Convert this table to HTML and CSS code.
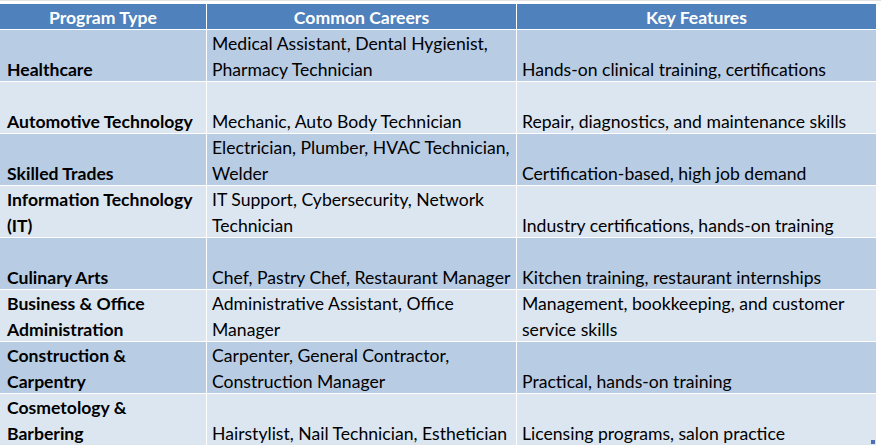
FILE: index.html
```html
<!DOCTYPE html>
<html lang="en">
<head>
<meta charset="utf-8">
<title>Vocational Programs</title>
<link rel="stylesheet" href="styles.css">
</head>
<body>
<div class="sheet">
  <div class="table">
    <div class="cell head"><span class="txt">Program Type</span></div>
    <div class="cell head"><span class="txt">Common Careers</span></div>
    <div class="cell head"><span class="txt">Key Features</span></div>

    <div class="cell dark name"><span class="txt">Healthcare</span></div>
    <div class="cell dark"><span class="txt">Medical Assistant, Dental Hygienist,<br>Pharmacy Technician</span></div>
    <div class="cell dark"><span class="txt">Hands-on clinical training, certifications</span></div>

    <div class="cell light name"><span class="txt">Automotive Technology</span></div>
    <div class="cell light"><span class="txt">Mechanic, Auto Body Technician</span></div>
    <div class="cell light"><span class="txt">Repair, diagnostics, and maintenance skills</span></div>

    <div class="cell dark name"><span class="txt">Skilled Trades</span></div>
    <div class="cell dark"><span class="txt">Electrician, Plumber, HVAC Technician,<br>Welder</span></div>
    <div class="cell dark"><span class="txt">Certification-based, high job demand</span></div>

    <div class="cell light name"><span class="txt">Information Technology<br>(IT)</span></div>
    <div class="cell light"><span class="txt">IT Support, Cybersecurity, Network<br>Technician</span></div>
    <div class="cell light"><span class="txt">Industry certifications, hands-on training</span></div>

    <div class="cell dark name"><span class="txt">Culinary Arts</span></div>
    <div class="cell dark"><span class="txt">Chef, Pastry Chef, Restaurant Manager</span></div>
    <div class="cell dark"><span class="txt">Kitchen training, restaurant internships</span></div>

    <div class="cell light name"><span class="txt">Business &amp; Office<br>Administration</span></div>
    <div class="cell light"><span class="txt">Administrative Assistant, Office<br>Manager</span></div>
    <div class="cell light"><span class="txt">Management, bookkeeping, and customer<br>service skills</span></div>

    <div class="cell dark name"><span class="txt">Construction &amp;<br>Carpentry</span></div>
    <div class="cell dark"><span class="txt">Carpenter, General Contractor,<br>Construction Manager</span></div>
    <div class="cell dark"><span class="txt">Practical, hands-on training</span></div>

    <div class="cell light name"><span class="txt">Cosmetology &amp;<br>Barbering</span></div>
    <div class="cell light"><span class="txt">Hairstylist, Nail Technician, Esthetician</span></div>
    <div class="cell light"><span class="txt">Licensing programs, salon practice</span><span class="handle"></span></div>
  </div>
</div>
</body>
</html>
```

FILE: styles.css
```css
html, body {
  margin: 0;
  padding: 0;
  background: #ffffff;
}

.sheet {
  padding-top: 3px;
  border-top: 1px solid #e3e3e3;
  width: 881px;
  height: 448px;
  box-sizing: border-box;
  font-family: Lato, "Open Sans", sans-serif;
  font-size: 17.6px;
  color: #000000;
}

.table {
  display: grid;
  grid-template-columns: 206px 309px 359px;
  grid-template-rows: 25px repeat(8, 51px);
  column-gap: 1px;
  row-gap: 1px;
  width: 876px;
  background: #ffffff;
  border-bottom: 1px solid #ffffff;
}

.cell {
  display: flex;
  flex-direction: column;
  justify-content: flex-end;
  padding: 0 5px;
  line-height: 26px;
  white-space: nowrap;
  position: relative;
}

.txt {
  display: block;
  margin-bottom: -2px;
}

.head {
  background: #4f81bd;
  color: #ffffff;
  font-weight: 700;
  align-items: center;
  justify-content: center;
  line-height: 25px;
}

.head .txt {
  margin-bottom: 0;
  position: relative;
  top: 1px;
}

.name {
  font-weight: 700;
  padding-left: 7px;
}

.dark {
  background: #b8cce4;
}

.light {
  background: #dce6f1;
}

.handle {
  position: absolute;
  right: 1px;
  bottom: 1px;
  width: 4px;
  height: 4px;
  background: #4f6fb0;
}
```
